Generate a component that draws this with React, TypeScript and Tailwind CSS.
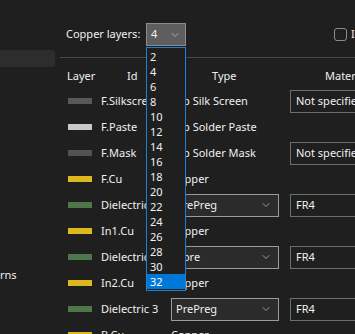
import { ChevronDown } from "lucide-react";

const rows = [
  { name: "F.Silkscreen", swatch: "bg-[#585858]", type: "Top Silk Screen", material: "Not specified" },
  { name: "F.Paste", swatch: "bg-[#c8c8c8]", type: "Top Solder Paste" },
  { name: "F.Mask", swatch: "bg-[#525252]", type: "Top Solder Mask", material: "Not specified" },
  { name: "F.Cu", swatch: "bg-[#dcb71e]", type: "Copper" },
  { name: "Dielectric 1", swatch: "bg-[#4b774a]", select: "PrePreg", material: "FR4" },
  { name: "In1.Cu", swatch: "bg-[#dcb71e]", type: "Copper" },
  { name: "Dielectric 2", swatch: "bg-[#4b774a]", select: "Core", material: "FR4" },
  { name: "In2.Cu", swatch: "bg-[#dcb71e]", type: "Copper" },
  { name: "Dielectric 3", swatch: "bg-[#4b774a]", select: "PrePreg", material: "FR4" },
  { name: "B.Cu", swatch: "bg-[#dcb71e]", type: "Copper" },
];

const counts = [2, 4, 6, 8, 10, 12, 14, 16, 18, 20, 22, 24, 26, 28, 30, 32];

type Row = { name: string; swatch: string; select?: string; material?: string; type?: string };

function StackRow({ row }: { row: Row }) {
  return (
    <div className="flex h-[26px] shrink-0 items-center whitespace-nowrap">
      <div className={`ml-[8px] h-[6px] w-[24px] shrink-0 ${row.swatch}`} />
      <div className="w-[79px] shrink-0 pl-[9px]">{row.name}</div>
      <div className="w-[119px] shrink-0">
        {row.select ? (
          <div className="flex h-[23px] w-[108px] items-center justify-between border border-[#9b9b9b] bg-[#2b2b2b] pl-[4px] pr-[6px]">
            <span>{row.select}</span>
            <ChevronDown size={12} strokeWidth={1.5} className="text-[#c0c0c0]" />
          </div>
        ) : (
          <span>{row.type}</span>
        )}
      </div>
      {row.material && (
        <div className="flex h-[23px] w-[90px] shrink-0 items-center border border-[#6e6e6e] pl-[5px]">
          {row.material}
        </div>
      )}
    </div>
  );
}

export default function App() {
  return (
    <div
      className="relative flex h-[334px] w-[355px] overflow-hidden bg-[#1f1f1f] text-[11px] text-[#f0f0f0]"
      style={{ fontFamily: '"Noto Sans", "DejaVu Sans", sans-serif' }}
    >
      <aside className="flex w-[60px] shrink-0 flex-col">
        <div className="mt-[50px] h-[17px] w-[55px] shrink-0 rounded-r-[3px] bg-[#2d2d2d]" />
        <div className="mt-[201px] shrink-0 leading-[14px]">rns</div>
      </aside>

      <main className="flex min-w-0 flex-1 flex-col">
        <div className="flex h-[57px] shrink-0 items-center whitespace-nowrap pl-[6px] pt-[12px]">
          <span className="w-[80px] shrink-0">Copper layers:</span>
          <div className="flex h-[23px] w-[40px] shrink-0 items-center justify-between border border-[#8c8c8c] bg-[#5e5e5e] pl-[4px] pr-[4px]">
            <span>4</span>
            <ChevronDown size={12} strokeWidth={1.5} className="text-[#c8c8c8]" />
          </div>
          <div className="ml-[148px] flex shrink-0 items-center gap-[4px]">
            <div className="h-[13px] w-[13px] rounded-[3px] border border-[#8c8c8c]" />
            <span>Impedance controlled</span>
          </div>
        </div>
        <div className="h-px shrink-0 bg-[#484848]" />

        <div className="flex h-[30px] shrink-0 items-center whitespace-nowrap pt-[6px]">
          <span className="ml-[7px] w-[60px] shrink-0">Layer</span>
          <span className="w-[85px] shrink-0">Id</span>
          <span className="w-[113px] shrink-0">Type</span>
          <span>Material</span>
        </div>

        <div className="flex shrink-0 flex-col">
          {rows.map((row) => (
            <StackRow key={row.name} row={row} />
          ))}
        </div>
      </main>

      <div className="absolute left-[146px] top-[47px] w-[40px] border border-[#1e7fd6] bg-[#1f1f1f] py-px">
        {counts.map((c) => (
          <div
            key={c}
            className={`h-[15px] pl-[3px] leading-[15px] ${c === 32 ? "bg-[#0078d7] text-white" : ""}`}
          >
            {c}
          </div>
        ))}
      </div>
    </div>
  );
}
